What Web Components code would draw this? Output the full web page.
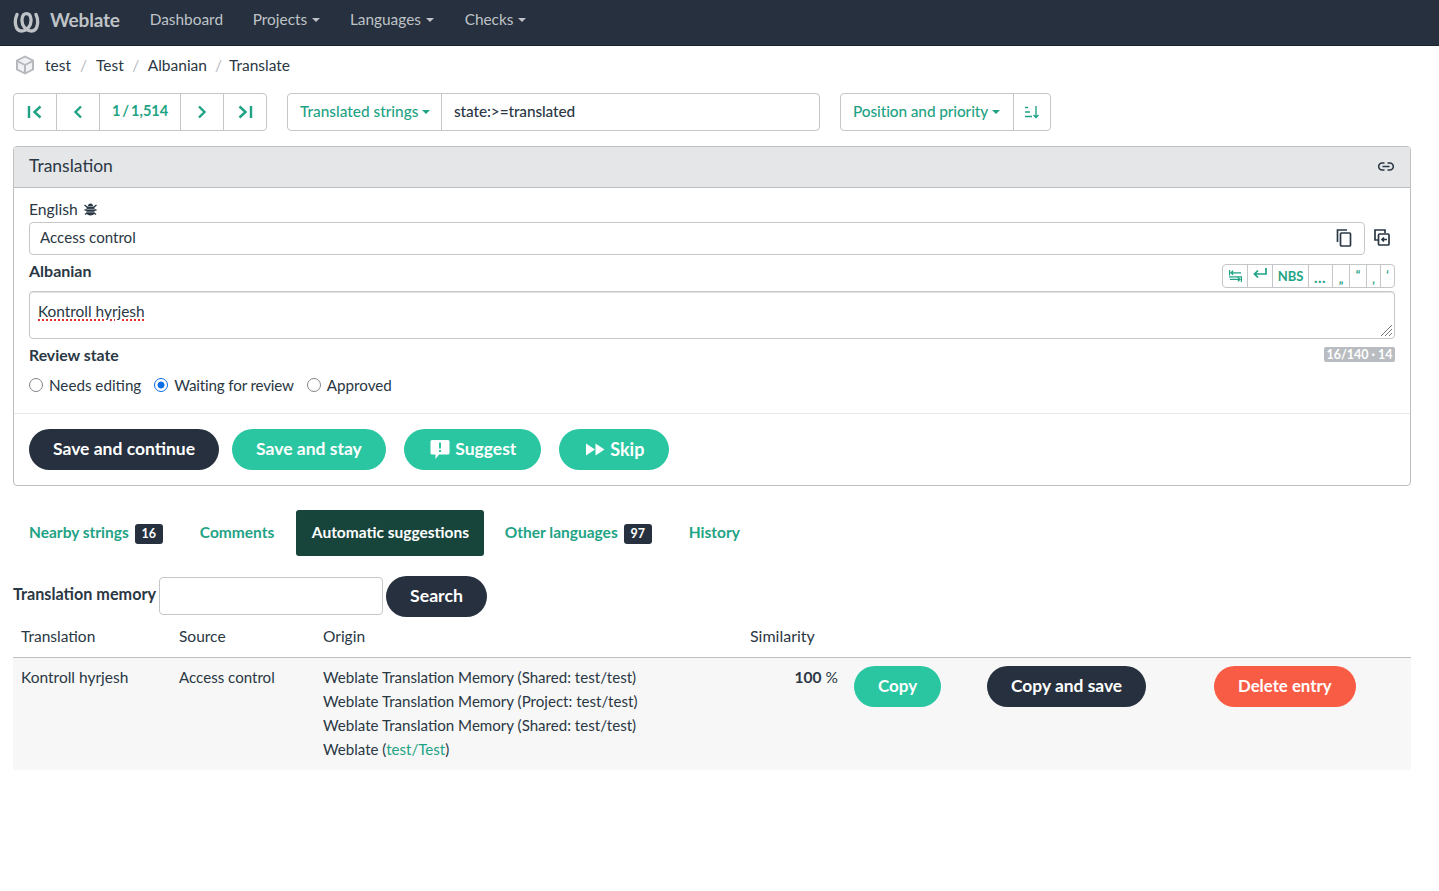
<!DOCTYPE html>
<html lang="en"><head><meta charset="utf-8"><title>Weblate</title>
<style>
html,body{margin:0;padding:0;background:#fff}
body{font:15.5px/24px "Lato","Liberation Sans",sans-serif;color:#2a3744;height:891px;overflow:hidden}
wl-main{display:block;padding:0 28px 0 13px}
</style></head><body>
<wl-nav></wl-nav>
<wl-main>
<wl-crumbs></wl-crumbs>
<wl-toolbar></wl-toolbar>
<wl-panel></wl-panel>
<wl-tabs></wl-tabs>
<wl-memory></wl-memory>
</wl-main>
<script>
function def(n,css,html){customElements.define(n,class extends HTMLElement{constructor(){super();this.attachShadow({mode:'open'}).innerHTML='<style>'+css+'</style>'+(html||'<slot></slot>')}})}
def('wl-btn',`:host{display:inline-flex;align-items:center;justify-content:center;height:41px;padding:0 24px 1px;border-radius:21px;background:#2ac6a2;color:#fff;font-weight:700;font-size:17.5px;box-sizing:border-box;white-space:nowrap;gap:5px}
:host([dark]){background:#26303e}:host([red]){background:#f95c45}`);
def('wl-nav',`:host{display:flex;align-items:center;height:45px;background:#26303e;border-bottom:1px solid #1b2531;color:#bfc3c7;box-sizing:content-box;padding-left:13px}
.b{font-weight:700;font-size:19px;margin:0 30px 6px 10px;letter-spacing:-.2px}
a{margin:0 29.7px 7px 0;display:flex;align-items:center;gap:5px;font-size:15.4px}
i{border:4px solid transparent;border-top-color:currentColor;border-bottom:0;width:0;height:0;margin-top:1px}svg{display:block}`,
`<svg width="27" height="21" viewBox="0 0 27 21" fill="none" stroke="#bfc3c7" stroke-width="3.300" stroke-linecap="round"><path d="M4 2.500C1 9 2 19 8.500 19C14.500 19 18.500 13 18 7.500C17.700 3.500 15.500 1.700 13.500 1.700C11.500 1.700 9.300 3.500 9 7.500C8.500 13 12.500 19 18.500 19C25 19 26 9 23 2.500"/></svg>
<span class="b">Weblate</span><a>Dashboard</a><a>Projects <i></i></a><a style="margin-right:30.700px">Languages <i></i></a><a>Checks <i></i></a>`);
def('wl-crumbs',`:host{display:flex;align-items:center;height:38px;font-size:15.5px;color:#2a3744}
span{padding-bottom:1px}
svg{margin:0 10px 0 2px}u{text-decoration:none;color:#b9bcbf;margin:0 9px 1px 9px}`,
`<svg width="20" height="20" viewBox="0 0 20 20"><path d="M10 .5L1 5V15L10 19.500L19 15V5Z" fill="#b5b9bd"/><path d="M10 2.500L3.500 5.800L10 9L16.500 5.800ZM3 7.500V14L9 17V10.500ZM11 10.500V17L17 14V7.500Z" fill="#fff" opacity=".8"/></svg>
<span>test</span><u>/</u><span>Test</span><u style="margin:0 8.500px 1px">/</u><span>Albanian</span><u style="margin:0 7px 1px 8px">/</u><span>Translate</span>`);
def('wl-group',`:host{display:inline-flex;height:38px;box-sizing:border-box;border:1px solid #c4c6c8;border-radius:4px;color:#1fa385;font-weight:500;align-items:stretch;font-size:15.4px}
::slotted(*){display:flex;align-items:center;justify-content:center;border-left:1px solid #c4c6c8;box-sizing:border-box}::slotted(:first-child){border-left:0}`);
def('wl-toolbar',`:host{display:flex;align-items:flex-start;height:53px;margin-top:9px;gap:20px}
.n{width:43px}.p{width:81px;word-spacing:-1.500px;font-size:14.500px;font-weight:700;padding-bottom:2px}svg{display:block}
.f{padding:0 0 2px 12px;gap:4px;white-space:nowrap;justify-content:flex-start!important}
.q{width:378px;color:#2a3744;justify-content:flex-start!important;padding:0 0 2px 12px;letter-spacing:-.1px}
.s{width:37px}
i{border:4px solid transparent;border-top-color:currentColor;border-bottom:0;width:0;height:0;margin-top:1px}`,
`<wl-group>
<span class="n" style="width:42px"><svg width="16" height="14" viewBox="0 0 16 14" fill="none" stroke="#1fa385" stroke-width="2.400"><path d="M2 1V13M13.500 1.500L7.500 7L13.500 12.500"/></svg></span>
<span class="n"><svg width="10" height="14" viewBox="0 0 10 14" fill="none" stroke="#1fa385" stroke-width="2.400"><path d="M8 1.500L2.500 7L8 12.500"/></svg></span>
<span class="p">1 / 1,514</span>
<span class="n"><svg width="10" height="14" viewBox="0 0 10 14" fill="none" stroke="#1fa385" stroke-width="2.400"><path d="M2 1.500L7.500 7L2 12.500"/></svg></span>
<span class="n"><svg width="16" height="14" viewBox="0 0 16 14" fill="none" stroke="#1fa385" stroke-width="2.400"><path d="M14 1V13M2.500 1.500L8.500 7L2.500 12.500"/></svg></span>
</wl-group>
<wl-group><span class="f" style="width:153px">Translated strings <i></i></span><span class="q">state:&gt;=translated</span></wl-group>
<wl-group><span class="f" style="width:172px;letter-spacing:-.1px">Position and priority <i></i></span><span class="s"><svg width="16" height="14" viewBox="0 0 16 14" fill="none" stroke="#1fa385" stroke-width="1.400"><path d="M1 2.500H4M1 7H6M1 11.500H8M12 1V12.500M9.500 10L12 12.500L14.500 10"/></svg></span></wl-group>`);
def('wl-panel',`:host{display:block;border:1px solid #bdbfc1;border-radius:4px;box-sizing:border-box;height:340px;width:1398px;background:#fff;overflow:hidden}
.h{height:40px;background:#e4e6e8;border-bottom:1px solid #bdbfc1;display:flex;align-items:center;justify-content:space-between;padding:0 16px 0 15px;font-size:17.5px}
.h span{padding-bottom:2px}.h svg{margin-bottom:2px}
.b{padding:10px 15px 0;height:226px;box-sizing:border-box;border-bottom:1px solid #e8e9ea}
.l{display:flex;align-items:center;gap:6px;height:24px;box-sizing:border-box;padding-bottom:2px;font-size:15.7px}
.src{display:flex;gap:9px;align-items:center}
.src>svg{margin:0 5px 3px 0}
.inp{flex:1;height:33px;box-sizing:border-box;border:1px solid #c4c6c8;border-radius:4px;padding:0 12px 0 10px;display:flex;align-items:center;justify-content:space-between}
.inp span{font-size:15.100px;padding-bottom:3px}.inp svg{margin-bottom:2px}
.t{display:flex;justify-content:space-between;align-items:flex-start;height:36px}
b{font-weight:700;font-size:16px}
.t b{margin-top:4px}
.tools{display:flex;height:24px;margin-top:9px;border:1px solid #c4c6c8;border-radius:4px;color:#1fa385;font-weight:700;font-size:13px;box-sizing:border-box}
.tools span{display:flex;align-items:center;justify-content:center;border-left:1px solid #c4c6c8;box-sizing:border-box}.tools span:first-child{border-left:0}
.ta{height:48px;box-sizing:border-box;border:1px solid #c4c6c8;border-radius:4px;box-shadow:inset 0 1px 1px rgba(0,0,0,.12);padding:7px 8px;position:relative;font-size:15.4px}
.ta u{text-decoration:underline dotted #e03030 1.500px;text-underline-offset:2px}
.grip{position:absolute;right:1px;bottom:1px}
.rs{display:flex;justify-content:space-between;height:33px;align-items:flex-start}
.rs b{margin-top:4px;font-size:15.800px}
.cnt{background:#b9bcc0;color:#fff;font-weight:700;font-size:12.500px;line-height:15px;height:15px;padding:0 2.500px;border-radius:2px;margin-top:8px}
.r{display:flex;align-items:center;height:26px;font-size:15.200px}
.r span{display:flex;align-items:center;gap:6px;margin-right:13px}
.r span:nth-child(2){letter-spacing:-.17px}
.r i{width:14px;height:14px;box-sizing:border-box;border:1.500px solid #85848c;border-radius:50%;background:#fff;margin-top:-1px}
.r i.on{border-color:#0b6ee8;background:radial-gradient(circle,#0b6ee8 0 3.200px,#fff 3.800px)}
.a{display:flex;gap:18px;padding:15px}.a wl-btn:first-child{margin-right:-5px}svg{display:block}`,
`<div class="h"><span>Translation</span><svg width="16" height="9" viewBox="0 0 16 9" fill="none" stroke="#2a3744" stroke-width="1.600"><path d="M6.500 1H4.200A3.200 3.200 0 0 0 4.200 8H6.500M9.500 1H11.800A3.200 3.200 0 0 1 11.800 8H9.500M4.500 4.500H11.500"/></svg></div>
<div class="b">
<div class="l">English <svg width="13" height="14" viewBox="0 0 13 14" fill="#2a3744"><path d="M2.500 4.500H10.500V11C10.500 12.500 8.500 13.500 6.500 13.500S2.500 12.500 2.500 11ZM4 4C4 2.500 5 1.500 6.500 1.500S9 2.500 9 4Z"/><path d="M.5 3L3 5M12.500 3L10 5M.5 8H3M12.500 8H10M1 12.500L3 11M12 12.500L10 11" stroke="#2a3744" stroke-width="1.400"/><path d="M2.500 7.300H10.500M2.500 10H10.500" stroke="#fff" stroke-width=".5"/></svg></div>
<div class="src"><div class="inp"><span>Access control</span><svg width="16" height="18" viewBox="0 0 16 18" fill="none" stroke="#2a3744" stroke-width="1.700"><path d="M1.500 13V1H11"/><rect x="4.500" y="4" width="10" height="13" rx="1"/></svg></div>
<svg width="16" height="17" viewBox="0 0 16 17" fill="none" stroke="#2a3744" stroke-width="1.700"><path d="M4 11H1V1H11V4"/><rect x="4.500" y="5" width="10.500" height="11" rx="1"/><path d="M13 10.500H8M10 8.500L8 10.500L10 12.500"/></svg></div>
<div class="t"><b>Albanian</b><div class="tools">
<span style="width:24px"><svg width="13" height="12" viewBox="0 0 13 12" fill="none" stroke="#1fa385" stroke-width="1.200"><path d="M.6 0V5.500M12 2.800H2M4.200 .8L2 2.800L4.200 4.800M0 6.800H13M12.400 6.500V12M1 9.400H11M8.800 7.400L11 9.400L8.800 11.400"/></svg></span>
<span style="width:25px;padding-bottom:6px"><svg width="14" height="10" viewBox="0 0 14 10" fill="none" stroke="#1fa385" stroke-width="1.700"><path d="M13 0V6H1.500M5 2.500L1.500 6L5 9.500"/></svg></span>
<span style="width:36px;font-size:13px">NBS</span><span style="width:24px;letter-spacing:1.500px;padding-top:2px;font-size:15px">…</span><span style="width:17px;padding-top:5px;font-size:12px">„</span><span style="width:17px;padding-bottom:3px;font-size:12px">“</span><span style="width:14px;padding-top:5px;font-size:12px">‚</span><span style="width:14px;padding-bottom:3px;font-size:12px">‘</span></div></div>
<div class="ta"><u>Kontroll hyrjesh</u><svg class="grip" width="13" height="13" viewBox="0 0 13 13" stroke="#777" fill="none"><path d="M1 12L12 1M5 12L12 5M9 12L12 9"/></svg></div>
<div class="rs"><b>Review state</b><span class="cnt">16/140 · 14</span></div>
<div class="r"><span><i></i>Needs editing</span><span><i class="on"></i>Waiting for review</span><span><i></i>Approved</span></div>
</div>
<div class="a"><wl-btn dark>Save and continue</wl-btn><wl-btn>Save and stay</wl-btn><wl-btn style="width:137px;padding-left:0;padding-right:0"><svg width="22" height="21" viewBox="0 0 22 21"><path fill-rule="evenodd" fill="#fff" d="M4 1H20A1.500 1.500 0 0 1 21.500 2.500V14A1.500 1.500 0 0 1 20 15.500H11L7.500 20V15.500H4A1.500 1.500 0 0 1 2.500 14V2.500A1.500 1.500 0 0 1 4 1ZM11 3.500V9.500H13V3.500ZM11 11V13H13V11Z"/></svg>Suggest</wl-btn><wl-btn style="font-size:18px;width:110px;padding-left:0;padding-right:0"><svg width="22" height="13" viewBox="0 0 22 13" fill="#fff"><path d="M3 .5L12 6.500L3 12.500ZM12.500 .5L21.500 6.500L12.500 12.500Z"/></svg>Skip</wl-btn></div>`);
def('wl-tabs',`:host{display:flex;align-items:center;height:46px;margin-top:24px;color:#1fa385;font-weight:700;font-size:15.500px}
span{padding:0 16px 2px;height:46px;display:flex;align-items:center;gap:6px;white-space:nowrap;border-radius:3px;box-sizing:border-box}
.on{background:#17453b;color:#fff;width:188px}
em{font-style:normal;background:#26303e;color:#fff;font-size:12.500px;line-height:20px;width:28px;text-align:center;border-radius:3px;margin-top:3px}`,
`<span>Nearby strings <em>16</em></span><span style="margin-left:5px;width:107px">Comments</span><span class="on" style="margin-left:5px">Automatic suggestions</span><span style="margin-left:5px">Other languages <em>97</em></span><span style="margin-left:5px">History</span>`);
def('wl-memory',`:host{display:block;margin-top:20px}
.f{display:flex;align-items:center;height:41px;gap:3px}
b{font-weight:700}
.f b{font-size:16.200px;padding-bottom:5px}
.i{width:224px;height:38px;box-sizing:border-box;border:1px solid #c4c6c8;border-radius:4px;margin-bottom:2px}
.g{display:grid;grid-template-columns:158px 144px 427px 104px 133px 227px 205px}
.g>div{padding-left:8px}
.hd{display:flex;align-items:center;border-bottom:1px solid #bdbfc1;box-sizing:border-box;padding-bottom:2px;height:41px}
.c{background:#f7f7f7;height:112px;padding-top:8px;box-sizing:border-box}
.x{padding-top:7px}
.o{font-size:15.100px}
.pc{text-align:right;padding-right:8px}`,
`<div class="f"><b>Translation memory</b><div class="i"></div><wl-btn dark style="font-size:17.700px">Search</wl-btn></div>
<div class="g">
<div class="hd">Translation</div><div class="hd">Source</div><div class="hd">Origin</div><div class="hd" style="font-size:16px">Similarity</div><div class="hd"></div><div class="hd"></div><div class="hd"></div>
<div class="c x">Kontroll hyrjesh</div><div class="c x o">Access control</div>
<div class="c x o">Weblate Translation Memory (Shared: test/test)<br>Weblate Translation Memory (Project: test/test)<br>Weblate Translation Memory (Shared: test/test)<br>Weblate (<span style="color:#1fa385">test/Test</span>)</div>
<div class="c x pc"><b>100</b> %</div><div class="c"><wl-btn style="font-size:17px">Copy</wl-btn></div><div class="c"><wl-btn dark style="font-size:17.400px">Copy and save</wl-btn></div><div class="c"><wl-btn red style="font-size:16.800px">Delete entry</wl-btn></div>
</div>`);
</script></body></html>
